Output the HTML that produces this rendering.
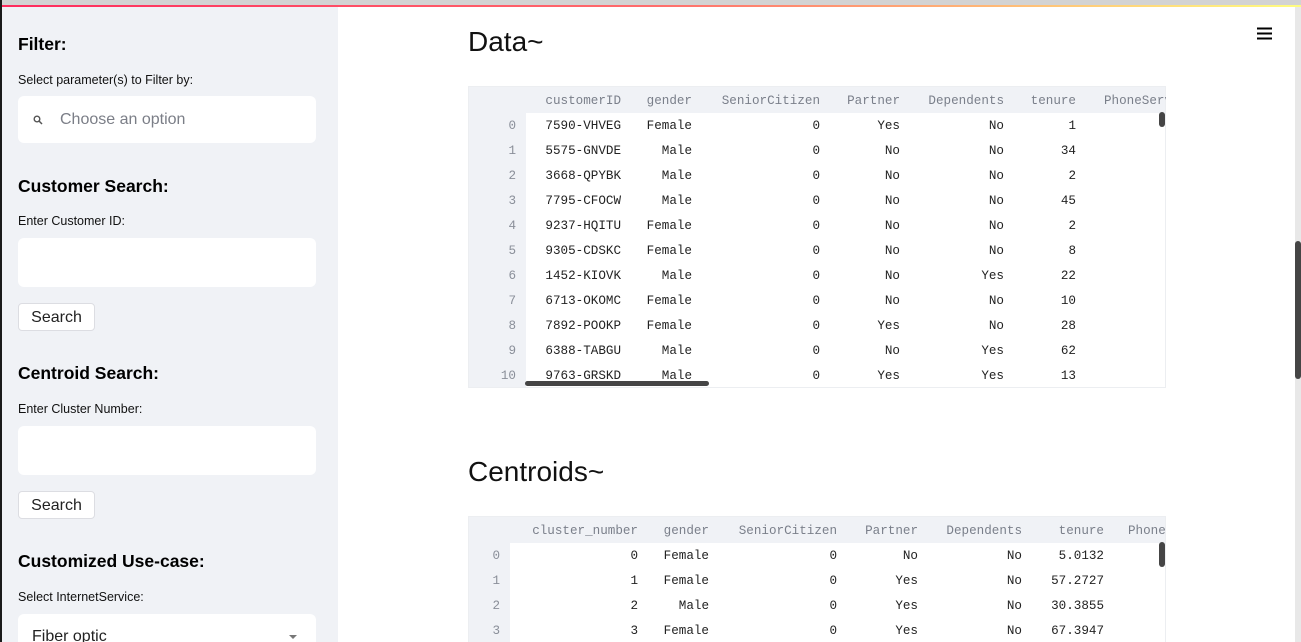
<!DOCTYPE html>
<html><head><meta charset="utf-8"><style>
*{margin:0;padding:0;box-sizing:border-box}
html{width:1301px;height:642px;overflow:hidden}
body{width:1301px;height:642px;overflow:hidden;background:#fff;position:relative;font-family:"Liberation Sans",sans-serif;color:#262730}
.a{position:absolute;white-space:nowrap}
#lb{left:0;top:0;width:2px;height:642px;background:#1a1a1a}
#tg{left:0;top:0;width:1301px;height:5px;background:#d3d3d3}
#tl{left:2px;top:5px;width:1299px;height:2px;background:linear-gradient(90deg,#ff2b5e,#ff6c6c 50%,#fffd80)}
#sb{left:2px;top:7px;width:336px;height:635px;background:#f0f2f6}
.h{font-weight:bold;font-size:17.5px;color:#000;left:18px}
.l{font-size:12.5px;color:#111;left:18px}
.in{left:18px;width:298px;background:#fff;border-radius:6px}
.bt{left:18px;width:77px;height:28px;background:#fff;border:1px solid #dcdde2;border-radius:4px;font-size:16px;text-align:center;line-height:28px;color:#222}
.t{font-size:28px;color:#111;left:468px}
.m{font-family:"Liberation Mono",monospace;font-size:12.6px;color:#222}
.hd{color:#7a7f8a}
.c{position:absolute;width:200px;text-align:right;font-family:"Liberation Mono",monospace;font-size:12.6px;color:#222;white-space:nowrap}
.hc{color:#7a7f8a}
.ix{position:absolute;text-align:right;font-family:"Liberation Mono",monospace;font-size:12.6px;color:#8a8f99}
</style></head><body>
<div class="a" id="tg"></div><div class="a" id="tl"></div>
<div class="a" id="sb"></div><div class="a" id="lb"></div>

<div class="a h" style="top:34px">Filter:</div>
<div class="a l" style="top:73px">Select parameter(s) to Filter by:</div>
<div class="a in" style="top:96px;height:47px"></div>
<svg class="a" style="left:33px;top:115px" width="10" height="10" viewBox="0 0 10 10"><circle cx="4" cy="4" r="2.8" fill="none" stroke="#555" stroke-width="1.4"/><path d="M6 6L9 9" stroke="#555" stroke-width="1.5"/></svg>
<div class="a" style="left:60px;top:111px;font-size:16px;color:#7b7e87">Choose an option</div>

<div class="a h" style="top:176px">Customer Search:</div>
<div class="a l" style="top:214px">Enter Customer ID:</div>
<div class="a in" style="top:238px;height:49px"></div>
<div class="a bt" style="top:303px">Search</div>

<div class="a h" style="top:363px">Centroid Search:</div>
<div class="a l" style="top:402px">Enter Cluster Number:</div>
<div class="a in" style="top:426px;height:49px"></div>
<div class="a bt" style="top:491px">Search</div>

<div class="a h" style="top:551px">Customized Use-case:</div>
<div class="a l" style="top:590px">Select InternetService:</div>
<div class="a in" style="top:614px;height:40px"></div>
<div class="a" style="left:32px;top:628px;font-size:16px;color:#222">Fiber optic</div>
<svg class="a" style="left:289px;top:634px" width="9" height="6"><path d="M0 1H8L4 5Z" fill="#777"/></svg>

<svg class="a" style="left:1257px;top:27px" width="15" height="13"><path d="M0 1.5H15M0 6.5H15M0 11.5H15" stroke="#000" stroke-width="2"/></svg>
<div class="a" style="left:1295px;top:7px;width:6px;height:635px;background:#e8e8e8"></div>
<div class="a" style="left:1295px;top:241px;width:6px;height:138px;background:#454545;border-radius:3px"></div>

<div class="a t" style="top:26px">Data~</div>
<div class="a" style="left:468px;top:86px;width:698px;height:302px;border:1px solid #eceef1;overflow:hidden">
 <div class="a" style="left:0;top:0;width:698px;height:26px;background:#f0f2f6"></div>
 <div class="a" style="left:0;top:0;width:57px;height:302px;background:#f0f2f6"></div>
</div>
<div class="a" style="left:525px;top:381px;width:184px;height:5px;background:#454545;border-radius:3px"></div>
<div class="a" style="left:1159px;top:112px;width:6px;height:15px;background:#454545;border-radius:3px"></div>

<div class="a t" style="top:456px">Centroids~</div>
<div class="a" style="left:468px;top:516px;width:698px;height:126px;border:1px solid #eceef1;border-bottom:none;overflow:hidden">
 <div class="a" style="left:0;top:0;width:698px;height:26px;background:#f0f2f6"></div>
 <div class="a" style="left:0;top:0;width:41px;height:140px;background:#f0f2f6"></div>
</div>
<div class="a" style="left:1159px;top:542px;width:6px;height:25px;background:#454545;border-radius:3px"></div>

<div style="position:absolute;left:0;top:2px;width:1301px;height:640px;overflow:hidden">
<div class="c hc" style="left:421px;top:92px">customerID</div>
<div class="c hc" style="left:492px;top:92px">gender</div>
<div class="c hc" style="left:620px;top:92px">SeniorCitizen</div>
<div class="c hc" style="left:700px;top:92px">Partner</div>
<div class="c hc" style="left:804px;top:92px">Dependents</div>
<div class="c hc" style="left:876px;top:92px">tenure</div>
<div class="a m hd" style="left:1104px;top:92px;width:62px;overflow:hidden">PhoneService</div>

<div class="ix" style="left:468px;width:48px;top:117px">0</div><div class="c" style="left:421px;top:117px">7590-VHVEG</div><div class="c" style="left:492px;top:117px">Female</div><div class="c" style="left:620px;top:117px">0</div><div class="c" style="left:700px;top:117px">Yes</div><div class="c" style="left:804px;top:117px">No</div><div class="c" style="left:876px;top:117px">1</div>
<div class="ix" style="left:468px;width:48px;top:142px">1</div><div class="c" style="left:421px;top:142px">5575-GNVDE</div><div class="c" style="left:492px;top:142px">Male</div><div class="c" style="left:620px;top:142px">0</div><div class="c" style="left:700px;top:142px">No</div><div class="c" style="left:804px;top:142px">No</div><div class="c" style="left:876px;top:142px">34</div>
<div class="ix" style="left:468px;width:48px;top:167px">2</div><div class="c" style="left:421px;top:167px">3668-QPYBK</div><div class="c" style="left:492px;top:167px">Male</div><div class="c" style="left:620px;top:167px">0</div><div class="c" style="left:700px;top:167px">No</div><div class="c" style="left:804px;top:167px">No</div><div class="c" style="left:876px;top:167px">2</div>
<div class="ix" style="left:468px;width:48px;top:192px">3</div><div class="c" style="left:421px;top:192px">7795-CFOCW</div><div class="c" style="left:492px;top:192px">Male</div><div class="c" style="left:620px;top:192px">0</div><div class="c" style="left:700px;top:192px">No</div><div class="c" style="left:804px;top:192px">No</div><div class="c" style="left:876px;top:192px">45</div>
<div class="ix" style="left:468px;width:48px;top:217px">4</div><div class="c" style="left:421px;top:217px">9237-HQITU</div><div class="c" style="left:492px;top:217px">Female</div><div class="c" style="left:620px;top:217px">0</div><div class="c" style="left:700px;top:217px">No</div><div class="c" style="left:804px;top:217px">No</div><div class="c" style="left:876px;top:217px">2</div>
<div class="ix" style="left:468px;width:48px;top:242px">5</div><div class="c" style="left:421px;top:242px">9305-CDSKC</div><div class="c" style="left:492px;top:242px">Female</div><div class="c" style="left:620px;top:242px">0</div><div class="c" style="left:700px;top:242px">No</div><div class="c" style="left:804px;top:242px">No</div><div class="c" style="left:876px;top:242px">8</div>
<div class="ix" style="left:468px;width:48px;top:267px">6</div><div class="c" style="left:421px;top:267px">1452-KIOVK</div><div class="c" style="left:492px;top:267px">Male</div><div class="c" style="left:620px;top:267px">0</div><div class="c" style="left:700px;top:267px">No</div><div class="c" style="left:804px;top:267px">Yes</div><div class="c" style="left:876px;top:267px">22</div>
<div class="ix" style="left:468px;width:48px;top:292px">7</div><div class="c" style="left:421px;top:292px">6713-OKOMC</div><div class="c" style="left:492px;top:292px">Female</div><div class="c" style="left:620px;top:292px">0</div><div class="c" style="left:700px;top:292px">No</div><div class="c" style="left:804px;top:292px">No</div><div class="c" style="left:876px;top:292px">10</div>
<div class="ix" style="left:468px;width:48px;top:317px">8</div><div class="c" style="left:421px;top:317px">7892-POOKP</div><div class="c" style="left:492px;top:317px">Female</div><div class="c" style="left:620px;top:317px">0</div><div class="c" style="left:700px;top:317px">Yes</div><div class="c" style="left:804px;top:317px">No</div><div class="c" style="left:876px;top:317px">28</div>
<div class="ix" style="left:468px;width:48px;top:342px">9</div><div class="c" style="left:421px;top:342px">6388-TABGU</div><div class="c" style="left:492px;top:342px">Male</div><div class="c" style="left:620px;top:342px">0</div><div class="c" style="left:700px;top:342px">No</div><div class="c" style="left:804px;top:342px">Yes</div><div class="c" style="left:876px;top:342px">62</div>
<div class="ix" style="left:468px;width:48px;top:367px">10</div><div class="c" style="left:421px;top:367px">9763-GRSKD</div><div class="c" style="left:492px;top:367px">Male</div><div class="c" style="left:620px;top:367px">0</div><div class="c" style="left:700px;top:367px">Yes</div><div class="c" style="left:804px;top:367px">Yes</div><div class="c" style="left:876px;top:367px">13</div>

<div class="c hc" style="left:438px;top:522px">cluster_number</div>
<div class="c hc" style="left:509px;top:522px">gender</div>
<div class="c hc" style="left:637px;top:522px">SeniorCitizen</div>
<div class="c hc" style="left:718px;top:522px">Partner</div>
<div class="c hc" style="left:822px;top:522px">Dependents</div>
<div class="c hc" style="left:904px;top:522px">tenure</div>
<div class="a m hd" style="left:1128px;top:522px;width:38px;overflow:hidden">PhoneService</div>

<div class="ix" style="left:468px;width:32px;top:547px">0</div><div class="c" style="left:438px;top:547px">0</div><div class="c" style="left:509px;top:547px">Female</div><div class="c" style="left:637px;top:547px">0</div><div class="c" style="left:718px;top:547px">No</div><div class="c" style="left:822px;top:547px">No</div><div class="c" style="left:904px;top:547px">5.0132</div>
<div class="ix" style="left:468px;width:32px;top:572px">1</div><div class="c" style="left:438px;top:572px">1</div><div class="c" style="left:509px;top:572px">Female</div><div class="c" style="left:637px;top:572px">0</div><div class="c" style="left:718px;top:572px">Yes</div><div class="c" style="left:822px;top:572px">No</div><div class="c" style="left:904px;top:572px">57.2727</div>
<div class="ix" style="left:468px;width:32px;top:597px">2</div><div class="c" style="left:438px;top:597px">2</div><div class="c" style="left:509px;top:597px">Male</div><div class="c" style="left:637px;top:597px">0</div><div class="c" style="left:718px;top:597px">Yes</div><div class="c" style="left:822px;top:597px">No</div><div class="c" style="left:904px;top:597px">30.3855</div>
<div class="ix" style="left:468px;width:32px;top:622px">3</div><div class="c" style="left:438px;top:622px">3</div><div class="c" style="left:509px;top:622px">Female</div><div class="c" style="left:637px;top:622px">0</div><div class="c" style="left:718px;top:622px">Yes</div><div class="c" style="left:822px;top:622px">No</div><div class="c" style="left:904px;top:622px">67.3947</div>
</div>
</body></html>
